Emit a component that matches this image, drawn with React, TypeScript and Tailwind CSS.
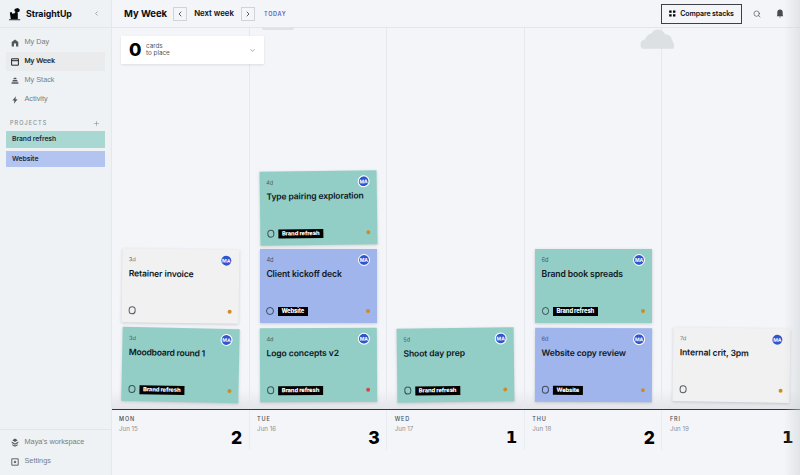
import React from "react";
import { ChevronDown, ChevronLeft, ChevronRight, Plus, Search } from "lucide-react";

type Card = {
  age: string;
  title: string;
  tag?: "Brand refresh" | "Website";
  tilt: string;
  dot?: string;
  tracking?: string;
};

type Day = { name: string; date: string; count: number; cards: Card[] };

const days: Day[] = [
  {
    name: "MON", date: "Jun 15", count: 2,
    cards: [
      { age: "3d", title: "Retainer invoice", tilt: "rotate-[0.8deg]" },
      { age: "3d", title: "Moodboard round 1", tag: "Brand refresh", tilt: "rotate-[1.2deg]", tracking: "tracking-[-0.23px]" },
    ],
  },
  {
    name: "TUE", date: "Jun 16", count: 3,
    cards: [
      { age: "4d", title: "Type pairing exploration", tag: "Brand refresh", tilt: "-rotate-[0.8deg]", tracking: "tracking-[-0.14px]" },
      { age: "4d", title: "Client kickoff deck", tag: "Website", tilt: "rotate-0" },
      { age: "4d", title: "Logo concepts v2", tag: "Brand refresh", tilt: "-rotate-[0.3deg]", dot: "bg-[#d0474b]" },
    ],
  },
  {
    name: "WED", date: "Jun 17", count: 1,
    cards: [{ age: "5d", title: "Shoot day prep", tag: "Brand refresh", tilt: "-rotate-[0.7deg]" }],
  },
  {
    name: "THU", date: "Jun 18", count: 2,
    cards: [
      { age: "6d", title: "Brand book spreads", tag: "Brand refresh", tilt: "rotate-0" },
      { age: "6d", title: "Website copy review", tag: "Website", tilt: "rotate-[0.2deg]" },
    ],
  },
  {
    name: "FRI", date: "Jun 19", count: 1,
    cards: [{ age: "7d", title: "Internal crit, 3pm", tilt: "rotate-[0.9deg]" }],
  },
];

function TaskCard({ card }: { card: Card }) {
  const color = card.tag === "Brand refresh" ? "bg-[#92cec6]" : card.tag === "Website" ? "bg-[#9fb5ec]" : "bg-[#f1f1f1]";
  const ring = card.tag ? "border-white" : "border-transparent";
  return (
    <div className={`flex h-[73.5px] w-[117px] shrink-0 flex-col pl-[6.5px] pr-[7px] shadow-[0_1px_3px_rgba(60,65,75,0.22)] ${color} ${card.tilt}`}>
      <div className="flex h-[20px] items-start justify-between">
        <span className="mt-[7px] text-[5.7px] leading-[8px] text-[#18202b]/70">{card.age}</span>
        <span className={`mt-[5px] flex size-[12px] items-center justify-center rounded-full border-[1.3px] bg-[#3154cf] bg-clip-padding text-[5px] font-bold leading-none text-white ${ring}`}>MA</span>
      </div>
      <div className={`whitespace-nowrap text-[8.6px] font-semibold leading-[10px] text-[#10171e] ${card.tracking ?? "tracking-[-0.1px]"}`}>{card.title}</div>
      <div className="mt-auto mb-[7px] flex h-[9px] items-center">
        <span className="size-[7.5px] rounded-full border border-[#18202b]/70" />
        {card.tag && (
          <span className="ml-[4px] flex h-[9px] items-center bg-black px-[3.5px] text-[5.8px] font-extrabold leading-none tracking-[-0.12px] text-white">{card.tag}</span>
        )}
        <span className={`ml-auto size-[4px] rounded-full ${card.dot ?? "bg-[#cc8d28]"}`} />
      </div>
    </div>
  );
}

function NavItem({ icon, label, active }: { icon: React.ReactNode; label: string; active?: boolean }) {
  return (
    <div className={`flex h-[19px] items-center gap-[5.5px] pl-[4px] font-['Liberation_Sans',Arial,sans-serif] text-[7.3px] ${active ? "bg-[#e9ebed] text-[#15181c] [-webkit-text-stroke:0.2px_#15181c]" : "text-[#777d82]"}`}>
      <span className="flex w-[9px] justify-center text-[#54585c]">{icon}</span>
      <span>{label}</span>
    </div>
  );
}

function Logo() {
  return (
    <svg width="12" height="14" viewBox="0 0 12 14" fill="#05070a">
      <rect x="0" y="12.4" width="11.2" height=".8" />
      <path d="M.8 5.6 2.6 5l.8 1.7 2.2-.4 1-1.5 2.2 1v6.4H1.8z" />
      <path d="m5.7 2 2.9-1 2.1 1.2-.2 2.4-2.7 1.1L5.4 4z" />
    </svg>
  );
}

const HomeIcon = () => (
  <svg width="8" height="8" viewBox="0 0 8 8" fill="currentColor"><path d="M4 .5.7 3v4.5H3v-3h2v3h2.3V3z" /></svg>
);
const WeekIcon = () => (
  <svg width="8" height="8" viewBox="0 0 8 8" fill="none" stroke="#24272b"><path d="M.6.8h6.8v6.4H.6zM.6 2.7h6.8" /></svg>
);
const StackIcon = () => (
  <svg width="8" height="8" viewBox="0 0 8 8" fill="currentColor"><path d="M3 .8h2l.8 1.5H2.2zM1.9 3h4.2l.7 1.5H1.2zM.6 5.3h6.8v1.5H.6z" /></svg>
);
const BoltIcon = () => (
  <svg width="8" height="8" viewBox="0 0 8 8" fill="currentColor"><path d="M4.9.3 1.4 4.5h2L2.9 7.7l3.7-4.4H4.5z" /></svg>
);
const LayersIcon = () => (
  <svg width="8" height="9" viewBox="0 0 8 9" fill="currentColor"><path d="m4 .5 2.7 1.7L4 4 1.3 2.2zM.7 3.6 4 5.5l3.3-1.9v1.3L4 6.8.7 4.9zM1.2 6.3 4 7.6l2.8-1.3v1L4 8.7 1.2 7.3z" /></svg>
);
const SettingsIcon = () => (
  <svg width="8" height="8" viewBox="0 0 8 8" fill="none" stroke="currentColor" strokeWidth=".9"><path d="M.8.8h6.4v6.4H.8z" /><circle cx="4" cy="4" r=".8" fill="currentColor" /></svg>
);

export default function App() {
  return (
    <div className="relative flex h-[475px] w-[800px] overflow-hidden bg-[#f3f5f9] font-[Inter,'Liberation_Sans',sans-serif] text-[#0b0e12]">
      <aside className="flex w-[112px] shrink-0 flex-col border-r border-[#e4e8ec] bg-[#eef2f5]">
        <div className="flex h-[28px] items-center border-b border-[#e2e6ea] pl-[9px] pr-[11px]">
          <Logo />
          <span className="ml-[5px] text-[8.8px] font-bold tracking-[-0.03px]">StraightUp</span>
          <ChevronLeft size={7} className="ml-auto text-[#6c7278]" />
        </div>
        <nav className="mt-[5px] px-[6px]">
          <NavItem icon={<HomeIcon />} label="My Day" />
          <NavItem icon={<WeekIcon />} label="My Week" active />
          <NavItem icon={<StackIcon />} label="My Stack" />
          <NavItem icon={<BoltIcon />} label="Activity" />
        </nav>
        <div className="mt-[9px] flex h-[10px] items-center justify-between pl-[10px] pr-[11px] text-[5.5px] text-[#888e93]">
          <span className="font-medium tracking-[1.05px]">PROJECTS</span>
          <Plus size={7} />
        </div>
        <div className="mt-[3.4px] flex flex-col gap-[3px] px-[6px] text-[6.8px] font-semibold leading-none tracking-[-0.05px] text-[#1d2a3d]">
          <div className="flex h-[16.5px] items-center bg-[#a9d8d2] pl-[6px]">Brand refresh</div>
          <div className="flex h-[16.5px] items-center bg-[#b3c4f0] pl-[6px]">Website</div>
        </div>
        <div className="mt-auto h-[46px] border-t border-[#e2e6ea] px-[6px] pt-[3px]">
          <NavItem icon={<LayersIcon />} label="Maya's workspace" />
          <NavItem icon={<SettingsIcon />} label="Settings" />
        </div>
      </aside>

      <main className="flex min-w-0 flex-1 flex-col">
        <header className="flex h-[28px] shrink-0 items-center border-b border-[#e2e5e9] pl-[12px] pr-[16px]">
          <h1 className="w-[49px] whitespace-nowrap pt-px text-[9.5px] font-bold">My Week</h1>
          <button className="flex size-[14px] items-center justify-center border border-[#d0d3d7]"><ChevronLeft size={8} /></button>
          <span className="w-[54px] whitespace-nowrap pt-px text-center text-[7.8px] font-semibold">Next week</span>
          <button className="flex size-[14px] items-center justify-center border border-[#d0d3d7]"><ChevronRight size={8} /></button>
          <span className="ml-[9px] pt-px text-[5.5px] font-semibold tracking-[0.7px] text-[#5360c7]">TODAY</span>
          <button className="ml-auto mr-[11px] flex h-[20px] w-[81px] items-center justify-center gap-[4px] border border-[#3d4046] text-[7px] font-semibold">
            <svg width="7" height="7" viewBox="0 0 7 7"><path d="M.2.5h2.4v2.2H.2zM4 .5h2.4v2.2H4zM.2 4.2h2.4v2.2H.2zM4 4.2h2.4v2.2H4z" /></svg>
            <span className="whitespace-nowrap pt-px tracking-[-0.1px]">Compare stacks</span>
          </button>
          <Search size={8} className="mr-[15px] text-[#4b4f55]" />
          <svg width="8" height="9" viewBox="0 0 8 9" fill="#484c50"><path d="M4 .5C2.2.5 1.3 1.7 1.3 3.3V6L.8 7.2h6.4L6.7 6V3.3C6.7 1.7 5.8.5 4 .5zM3 7.7h2c-.2.9-1.8.9-2 0z" /></svg>
        </header>

        <section className="relative grid h-[382px] grid-cols-5 border-b border-[#33363c] bg-linear-to-b from-transparent from-95% to-[#e3e5e9]">
          {days.map((day, i) => (
            <div key={day.name} className={`flex flex-col items-center justify-end gap-[5px] pb-[8px] ${i < 4 ? "border-r border-[#e5e8ec]" : ""} ${i > 0 ? "pl-px" : ""}`}>
              {day.cards.map((card) => <TaskCard key={card.title} card={card} />)}
            </div>
          ))}
          <div className="absolute left-[9px] top-[8px] flex h-[28px] w-[143px] items-center bg-white pl-[8px] pr-[8px] shadow-[0_1px_2px_rgba(60,65,75,0.12)]">
            <span className="w-[17px] text-[18px] font-extrabold leading-none text-black">0</span>
            <span className="text-[6.3px] leading-[7px] text-[#50545a]">cards<br />to place</span>
            <ChevronDown size={7} className="ml-auto text-[#6d7177]" />
          </div>
          <div className="absolute left-[150px] top-0 h-[2px] w-[32px] rounded-b-sm bg-[#dfe2e5]" />
          <svg className="absolute left-[528px] top-0" width="34" height="21" viewBox="0 0 34 21" fill="#dce0e3">
            <path d="M2 20.8C-.7 17 .2 12 5.3 11.3 6.3 7.500 9 6 11.500 5.500 14-.2 22.500 0 25 6.300 28.500 6.300 31.500 8.500 31.800 12 34.300 14.500 34.500 18.500 33.500 20.800z" />
          </svg>
        </section>

        <footer className="grid h-[40px] grid-cols-5">
          {days.map((day, i) => (
            <div key={day.name} className={`flex items-end justify-between pr-[6.5px] ${i < 4 ? "border-r border-[#e9ecf0]" : ""} ${i > 0 ? "pl-[7.5px]" : "pl-[7px]"}`}>
              <div className="mb-[17.5px] leading-[9px]">
                <div className="text-[5.5px] font-medium tracking-[0.9px] text-[#484c53]">{day.name}</div>
                <div className="text-[6.2px] text-[#8d9197]">{day.date}</div>
              </div>
              <div className={`mb-[3px] leading-[18px] text-black ${day.count === 1 ? "font-['DejaVu_Sans',sans-serif] text-[16.5px] font-bold" : "text-[17.5px] font-extrabold"}`}>{day.count}</div>
            </div>
          ))}
        </footer>
      </main>
      <div className="pointer-events-none absolute inset-y-0 right-0 w-[16px] bg-linear-to-r from-transparent to-[#cfd3d5]/50" />
    </div>
  );
}
